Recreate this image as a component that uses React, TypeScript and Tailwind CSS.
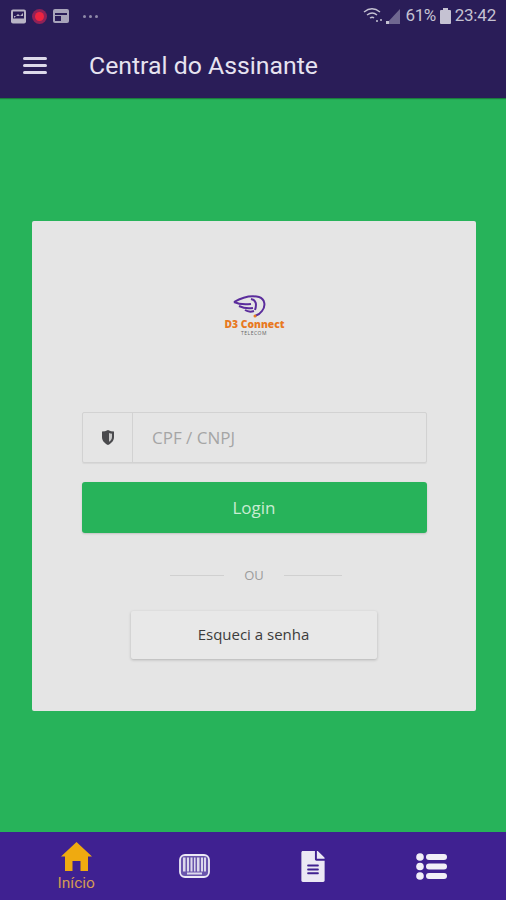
import React from "react";
import { FaFileAlt } from "react-icons/fa";

const sans = "font-['Open_Sans',sans-serif]";

// Status bar glyphs on the left
const StatusLeft = () => (
  <div className="flex items-center gap-[6px] pl-[11px]">
    <svg width="15" height="15" viewBox="0 0 15 15">
      <rect x="0" y="0.500" width="15" height="14" rx="2" fill="#b9b5c6" />
      <rect x="2" y="2.500" width="11" height="7" fill="#2a1d58" />
      <path d="M3 9l4-4 2 2 3-3v3H3z" fill="#b9b5c6" />
    </svg>
    <div className="flex h-[15px] w-[15px] items-center justify-center rounded-full bg-[#8f2257]">
      <div className="h-[9px] w-[9px] rounded-full bg-[#ee2440]" />
    </div>
    <svg width="16" height="14" viewBox="0 0 16 14">
      <rect width="16" height="14" rx="2" fill="#a8a4ba" />
      <rect x="2" y="4" width="12" height="2" fill="#2a1d58" />
      <rect x="2" y="7" width="6" height="5" fill="#2a1d58" />
    </svg>
    <div className="ml-[8px] flex gap-[3px]">
      <div className="h-[3px] w-[3px] rounded-full bg-[#8f8aa8]" />
      <div className="h-[3px] w-[3px] rounded-full bg-[#8f8aa8]" />
      <div className="h-[3px] w-[3px] rounded-full bg-[#8f8aa8]" />
    </div>
  </div>
);

const StatusRight = () => (
  <div className="flex items-center pr-[10px] font-['Roboto',sans-serif] text-[17px] text-[#c5c2d2]">
    <svg width="22" height="16" viewBox="0 0 22 16" fill="none" stroke="#c5c2d2" strokeWidth="1.400">
      <path d="M1 4c5-4 11-4 16 0" />
      <path d="M4 7c3.500-2.500 7-2.500 10 0" />
      <path d="M7 10c1.500-1 3-1 4 0" />
      <circle cx="14" cy="13" r="1" fill="#c5c2d2" stroke="none" />
      <circle cx="18" cy="12" r="1" fill="#c5c2d2" stroke="none" />
    </svg>
    <svg width="15" height="16" viewBox="0 0 15 16" className="mr-[6px]">
      <path d="M15 1v15H1z" fill="#6f6790" />
      <rect x="1" y="13" width="3" height="3" fill="#c5c2d2" />
    </svg>
    <span className="tracking-[-0.5px]">61%</span>
    <svg width="11" height="16" viewBox="0 0 11 16" className="mx-[4px]">
      <rect x="3" y="0" width="5" height="2" fill="#c5c2d2" />
      <rect x="0" y="2" width="11" height="14" rx="1" fill="#c5c2d2" />
    </svg>
    <span className="tracking-[-0.2px]">23:42</span>
  </div>
);

// D3 Connect logo
const Logo = () => (
  <div className="flex flex-col items-center">
    <svg width="34" height="24" viewBox="0 0 34 24" fill="none" stroke="#5b2d9c" strokeWidth="2" className="ml-[-8px]">
      <path d="M1 7C8 3 18 0 26 2c6 2 7 9 3 14-2 3-4 4-7 5" />
      <path d="M1 7c4 2 9 3 17 2" />
      <path d="M6 11c4 2 8 3 14 2" />
      <path d="M12 15c3 2 6 2 9 1" />
      <path d="M18 4c5 1 6 5 4 11" />
      <circle cx="22" cy="21" r="1.500" fill="#e8791f" stroke="none" />
    </svg>
    <div className="mt-[-1px] pl-[1px] text-[10.300px] leading-[12px] font-extrabold whitespace-nowrap text-[#e8791f]">D3 Connect</div>
    <div className="text-[5px] leading-[6px] tracking-[0.5px] text-[#666]">TELECOM</div>
  </div>
);

const ShieldIcon = () => (
  <svg width="14" height="15" viewBox="0 0 14 15">
    <path d="M1 1.500C3 1.500 5 1 7 0c2 1 4 1.500 6 1.500V7c0 4-3 6.500-6 8-3-1.500-6-4-6-8z" fill="#4a4a4d" />
    <path d="M8 3c1 .4 1.700.6 3 .7V7c0 2.200-1.200 3.700-3 4.800z" fill="#c9c9c9" />
  </svg>
);

const HomeIcon = () => (
  <svg width="31" height="29" viewBox="0 0 31 29">
    <path d="M15.500 0L31 14.500h-4V29h-7.500V19h-8v10H4V14.500H0z" fill="#efaa10" />
  </svg>
);

const BarcodeIcon = () => (
  <svg width="31" height="24" viewBox="0 0 31 24">
    <rect x="1" y="1" width="29" height="22" rx="5" fill="#6a55ad" stroke="#ece9f6" strokeWidth="1.800" />
    <g fill="#dcd8ec">
      <rect x="4" y="3.500" width="2.500" height="14" />
      <rect x="8" y="3.500" width="2" height="14" />
      <rect x="11.500" y="3.500" width="2" height="14" />
      <rect x="15" y="3.500" width="1.500" height="14" />
      <rect x="18" y="3.500" width="2.500" height="14" />
      <rect x="22" y="3.500" width="2" height="14" />
      <rect x="25" y="3.500" width="2" height="14" />
      <rect x="8" y="18.500" width="15" height="2" />
    </g>
  </svg>
);

const ListIcon = () => (
  <svg width="31" height="27" viewBox="0 0 31 27" fill="#f1eff8">
    <circle cx="4" cy="4" r="3.800" />
    <circle cx="4" cy="13.500" r="3.800" />
    <circle cx="4" cy="23" r="3.800" />
    <rect x="10" y="1" width="21" height="6" rx="3" />
    <rect x="10" y="10.500" width="21" height="6" rx="3" />
    <rect x="10" y="20" width="21" height="6" rx="3" />
  </svg>
);

const App = () => {
  return (
    <div className={`flex h-[900px] w-[506px] flex-col bg-[#27b35a] ${sans}`}>
      {/* Status bar and title */}
      <header className="h-[98px] shrink-0 bg-[#2a1d58] shadow-[0_1px_1px_rgba(0,0,0,0.3)]">
        <div className="flex h-[32px] items-center justify-between">
          <StatusLeft />
          <StatusRight />
        </div>
        <div className="flex h-[66px] items-center pl-[23px]">
          <div className="flex w-[24px] flex-col gap-[4px]">
            <div className="h-[3px] rounded-sm bg-[#dcd9ea]" />
            <div className="h-[3px] rounded-sm bg-[#dcd9ea]" />
            <div className="h-[3px] rounded-sm bg-[#dcd9ea]" />
          </div>
          <h1 className="ml-[42px] pt-[2px] font-['Roboto',sans-serif] text-[24.800px] font-normal text-[#e6e3f0]">Central do Assinante</h1>
        </div>
      </header>

      {/* Login card */}
      <main className="flex flex-1 justify-center pt-[123px] pl-[2px]">
        <section className="h-[490px] w-[444px] rounded-[2px] bg-[#e5e5e5] px-[50px] pt-[74px]">
          <div className="flex h-[117px] justify-center">
            <Logo />
          </div>
          <div className="flex h-[51px] w-[345px] rounded-[2px] border border-[#d2d2d2] shadow-[0_1px_1px_rgba(0,0,0,0.06)]">
            <div className="flex w-[50px] items-center justify-center border-r border-[#d2d2d2]">
              <ShieldIcon />
            </div>
            <div className="flex items-center pl-[19px] text-[17px] text-[#a5a5a5]">CPF / CNPJ</div>
          </div>
          <button className="mt-[19px] h-[51px] w-[345px] rounded-[3px] bg-[#27b35a] pr-[1px] text-[17px] text-[#c9ecd3] shadow-[0_1px_2px_rgba(0,0,0,0.15)]">
            Login
          </button>
          <div className="mt-[32px] flex h-[20px] items-center justify-center gap-[20px] pl-[4px] text-[13px] text-[#9c9c9c]">
            <div className="h-px w-[54px] bg-[#d0d0d0]" />
            <span className="translate-y-[1px]">OU</span>
            <div className="h-px w-[58px] bg-[#d0d0d0]" />
          </div>
          <div className="mt-[26px] flex justify-center pr-[1px]">
            <button className="h-[48px] w-[246px] rounded-[2px] bg-[#e8e8e8] pb-[2px] text-[15px] text-[#3c3c3c] shadow-[0_1px_3px_rgba(0,0,0,0.22)]">
              Esqueci a senha
            </button>
          </div>
        </section>
      </main>

      {/* Bottom navigation */}
      <nav className="grid h-[68px] shrink-0 grid-cols-4 bg-[#3f2191] pr-[15px] pl-[17px]">
        <div className="flex flex-col items-center pt-[10px]">
          <HomeIcon />
          <span className="mt-[3px] font-['Roboto',sans-serif] text-[15.500px] leading-[18px] text-[#d39a55]">Início</span>
        </div>
        <div className="flex items-start justify-center pt-[22px]">
          <BarcodeIcon />
        </div>
        <div className="flex items-start justify-center pt-[19px]">
          <FaFileAlt className="h-[31px] w-[24px] text-[#ebe8f4]" />
        </div>
        <div className="flex items-start justify-center pt-[21px]">
          <ListIcon />
        </div>
      </nav>
    </div>
  );
};

export default App;
